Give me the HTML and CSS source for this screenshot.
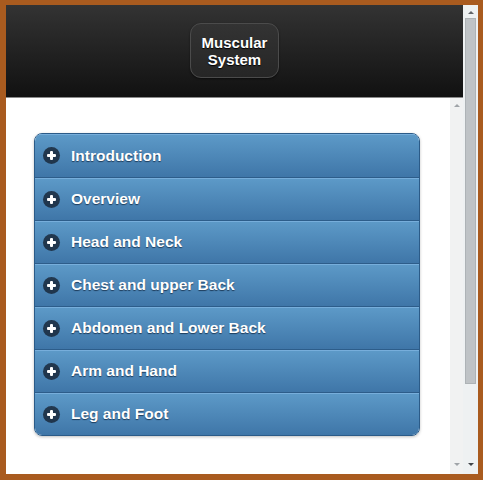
FILE: index.html
```html
<!DOCTYPE html>
<html>
<head>
<meta charset="utf-8">
<link rel="stylesheet" href="styles.css">
</head>
<body>
<div class="frame">
  <div class="main">
    <header class="header">
      <div class="title-btn">Muscular<br>System</div>
    </header>
    <div class="content-row">
      <div class="content">
        <ul class="list">
          <li class="item"><span class="plus"></span>Introduction</li>
          <li class="item"><span class="plus"></span>Overview</li>
          <li class="item"><span class="plus"></span>Head and Neck</li>
          <li class="item"><span class="plus"></span>Chest and upper Back</li>
          <li class="item"><span class="plus"></span>Abdomen and Lower Back</li>
          <li class="item"><span class="plus"></span>Arm and Hand</li>
          <li class="item"><span class="plus"></span>Leg and Foot</li>
        </ul>
      </div>
      <div class="inner-scroll">
        <span class="arrow up"></span>
        <span class="arrow down"></span>
      </div>
    </div>
  </div>
  <div class="outer-scroll">
    <span class="arrow up dark"></span>
    <div class="thumb"></div>
    <span class="arrow down dark"></span>
  </div>
</div>
</body>
</html>
```

FILE: styles.css
```css
html, body {
  margin: 0;
  padding: 0;
  background: #ffffff;
}
.frame {
  width: 483px;
  height: 480px;
  box-sizing: border-box;
  border-style: solid;
  border-color: #a95b1f;
  border-width: 5px 5px 6px 6px;
  box-shadow: inset 0 0 0 1px #d89a62;
  display: flex;
  font-family: "Liberation Sans", Arial, sans-serif;
}
.main {
  width: 457px;
  display: flex;
  flex-direction: column;
}
.header {
  height: 93px;
  background: linear-gradient(#333333, #111111);
  border-bottom: 1px solid #8a8a8a;
  display: flex;
  justify-content: center;
  align-items: flex-start;
  padding-top: 18px;
  box-sizing: border-box;
}
.title-btn {
  width: 89px;
  height: 55px;
  box-sizing: border-box;
  border: 1px solid #4b4b4b;
  border-radius: 11px;
  background: linear-gradient(#333333, #262626);
  box-shadow: 0 1px 2px rgba(0,0,0,0.5);
  color: #ffffff;
  font-weight: bold;
  font-size: 15px;
  line-height: 17px;
  text-align: center;
  padding-top: 10px;
  text-shadow: 0 1px 1px #000;
}
.content-row {
  flex: 1;
  display: flex;
}
.content {
  flex: 1;
  background: #ffffff;
  padding: 35px 0 0 28px;
}
.list {
  list-style: none;
  margin: 0;
  padding: 0;
  width: 386px;
  box-sizing: border-box;
  border: 1px solid #2b5b88;
  border-radius: 8px;
  overflow: hidden;
  box-shadow: 0 1px 3px rgba(0,0,0,0.25);
}
.item {
  height: 42px;
  display: flex;
  align-items: center;
  padding-left: 8px;
  color: #ffffff;
  font-weight: bold;
  font-size: 15.5px;
  text-shadow: 0 1px 1px #1d3b5a;
  background: linear-gradient(#5d9ac8, #3f76a8);
  border-top: 1px solid #2d5d8a;
  box-shadow: inset 0 1px 0 #77aedb;
}
.item:first-child {
  border-top: none;
  height: 43px;
}
.plus {
  position: relative;
  width: 17px;
  height: 17px;
  border-radius: 50%;
  background: rgba(20, 32, 48, 0.78);
  margin-right: 11px;
  flex: none;
}
.plus::before, .plus::after {
  content: "";
  position: absolute;
  background: #ffffff;
  border-radius: 1px;
}
.plus::before {
  left: 4px;
  top: 7px;
  width: 9px;
  height: 3px;
}
.plus::after {
  left: 7px;
  top: 4px;
  width: 3px;
  height: 9px;
}
.inner-scroll {
  width: 13px;
  background: #f1f2f2;
  display: flex;
  flex-direction: column;
  justify-content: space-between;
  align-items: center;
  padding: 6px 0 8px;
  box-sizing: border-box;
}
.outer-scroll {
  width: 15px;
  background: #eef1f2;
  display: flex;
  flex-direction: column;
  align-items: center;
  padding: 6px 0 8px;
  box-sizing: border-box;
}
.thumb {
  width: 11px;
  flex: none;
  height: 366px;
  margin: 4px 0 auto;
  background: #bfc3c6;
  border: 1px solid #aeb3b6;
  box-sizing: border-box;
}
.arrow {
  width: 0;
  height: 0;
  border-left: 3px solid transparent;
  border-right: 3px solid transparent;
}
.arrow.up {
  border-bottom: 3px solid #a0a4a8;
}
.arrow.down {
  border-top: 3px solid #a0a4a8;
}
.arrow.dark.up {
  border-bottom-color: #606468;
}
.arrow.dark.down {
  border-top-color: #404448;
}
```
